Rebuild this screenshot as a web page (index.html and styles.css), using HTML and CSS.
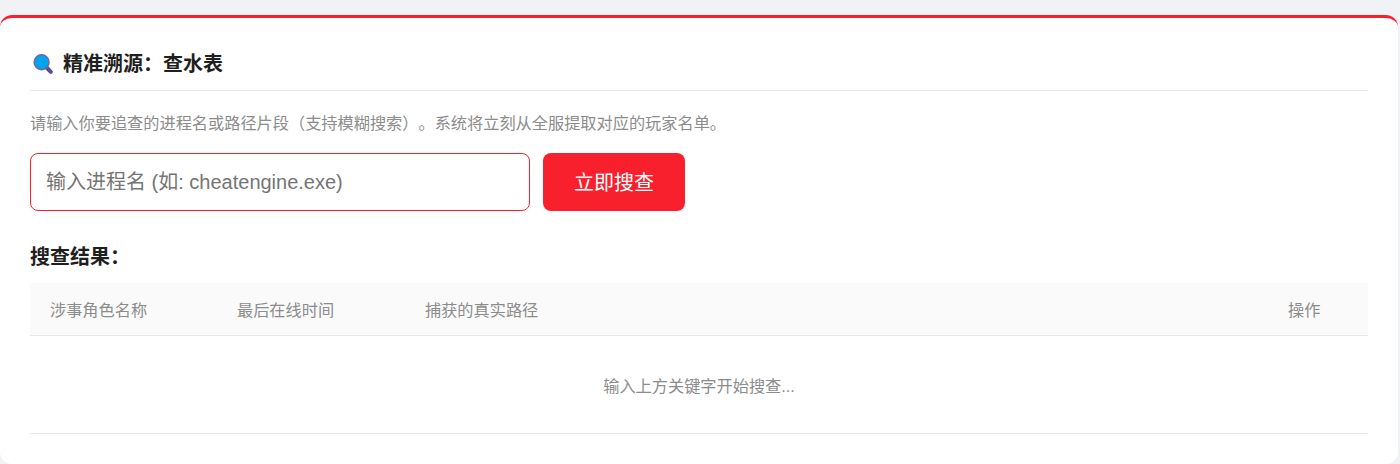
FILE: index.html
```html
<!DOCTYPE html>
<html lang="zh-CN">
<head>
<meta charset="utf-8">
<title>精准溯源:查水表</title>
<link rel="stylesheet" href="styles.css">
</head>
<body>
<main class="card">
  <h2 class="card-title">
    <svg class="icon" viewBox="0 0 20 20" width="20" height="20" aria-hidden="true">
      <line x1="13.5" y1="13.5" x2="17.8" y2="17.8" stroke="#5c4a8f" stroke-width="4" stroke-linecap="round"/>
      <circle cx="8.6" cy="8.2" r="7.4" fill="#00a6ed" stroke="#6a6aa8" stroke-width="1.6"/>
    </svg>
    <span>精准溯源&#xFF1A;查水表</span>
  </h2>
  <p class="desc">请输入你要追查的进程名或路径片段&#xFF08;支持模糊搜索&#xFF09;。系统将立刻从全服提取对应的玩家名单。</p>
  <form class="search">
    <input class="search-input" type="text" placeholder="输入进程名 (如: cheatengine.exe)">
    <button class="search-btn" type="button">立即搜查</button>
  </form>
  <h3 class="result-title">搜查结果&#xFF1A;</h3>
  <table class="result-table">
    <thead>
      <tr>
        <th class="col-name">涉事角色名称</th>
        <th class="col-time">最后在线时间</th>
        <th>捕获的真实路径</th>
        <th class="col-op">操作</th>
      </tr>
    </thead>
    <tbody>
      <tr><td class="empty" colspan="4">输入上方关键字开始搜查...</td></tr>
    </tbody>
  </table>
</main>
</body>
</html>
```
FILE: styles.css
```css
* { box-sizing: border-box; }
html, body { height: 100%; }
body {
  margin: 0;
  padding: 15px 2px 0 0;
  background: #f0f2f5;
  overflow: hidden;
  font-family: "Liberation Sans", "Noto Sans CJK SC", sans-serif;
  text-spacing-trim: space-all;
}
.card {
  background: #fff;
  border-top: 3px solid #f9202e;
  border-radius: 12px;
  padding: 32px 30px 30px;
  height: 449px;
}
.card-title {
  display: flex;
  align-items: center;
  gap: 10px;
  margin: 0 0 20px;
  padding: 0 0 13px 3px;
  height: 41px;
  border-bottom: 1px solid #e8e8e8;
  font-size: 20px;
  line-height: 30px;
  font-weight: 700;
  color: #1f1f1f;
}
.icon { flex: none; }
.desc {
  margin: 0 0 18px;
  font-size: 16.2px;
  line-height: 24px;
  color: #8c8c8c;
}
.search { display: flex; gap: 13px; margin: 0 0 31px; }
.search-input {
  width: 500px;
  height: 58px;
  padding: 0 15px;
  border: 1px solid #f9202e;
  border-radius: 8px;
  outline: none;
  font: 20px/30px "Liberation Sans", "Noto Sans CJK SC", sans-serif;
  color: #333;
}
.search-input::placeholder { color: #757575; }
.search-btn {
  width: 142px;
  height: 58px;
  padding: 0 0 2px;
  border: 0;
  border-radius: 8px;
  background: #f9202e;
  color: #fff;
  font: 20px "Liberation Sans", "Noto Sans CJK SC", sans-serif;
}
.result-title {
  margin: 0 0 11px;
  font-size: 20px;
  line-height: 30px;
  font-weight: 700;
  color: #1f1f1f;
}
.result-table { width: 100%; border-collapse: collapse; font-size: 16.2px; }
.result-table th {
  height: 52px;
  padding: 0 20px;
  background: #fafafa;
  border-bottom: 1px solid #e8e8e8;
  text-align: left;
  font-weight: 400;
  color: #8c8c8c;
}
.col-name { width: 187px; }
.col-time { width: 188px; }
.col-op { width: 100px; }
.empty {
  height: 98px;
  padding-top: 2px;
  border-bottom: 1px solid #e8e8e8;
  text-align: center;
  color: #8c8c8c;
}
```
